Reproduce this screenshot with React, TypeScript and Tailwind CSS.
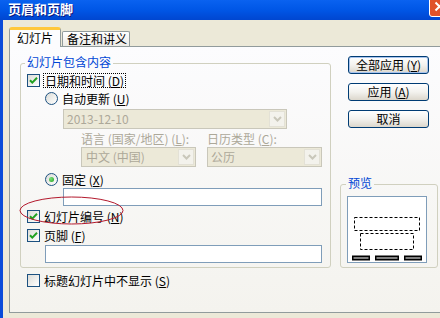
import React from "react"

const CheckBox = ({ checked }: { checked?: boolean }) => (
  <span className="w-[13px] h-[13px] shrink-0 border border-[#1C5180] bg-linear-to-br from-[#DCDCD7] to-white flex items-center justify-center">
    {checked && (
      <svg width="11" height="11" viewBox="0 0 11 11">
        <path d="M2 5.2 L4.3 7.6 L9 2.8" fill="none" stroke="#21A121" strokeWidth="2" />
      </svg>
    )}
  </span>
)

const Radio = ({ checked }: { checked?: boolean }) => (
  <span className="w-[13px] h-[13px] shrink-0 rounded-full border border-[#1C5180] bg-linear-to-br from-[#DCDCD7] to-white flex items-center justify-center">
    {checked && <span className="w-[5px] h-[5px] rounded-full bg-[radial-gradient(circle_at_35%_35%,#7BE27A,#1E9E1E)]" />}
  </span>
)

const DropBtn = () => (
  <span className="w-[16px] h-[16px] mr-[1px] shrink-0 bg-[#F3F2EC] border border-[#E3E1D6] flex items-center justify-center">
    <svg width="9" height="6" viewBox="0 0 9 6">
      <path d="M1 1 L4.5 4.5 L8 1" fill="none" stroke="#C9C7BA" strokeWidth="2" />
    </svg>
  </span>
)

const Btn = ({ children, primary }: { children: React.ReactNode; primary?: boolean }) => (
  <div
    className={
      primary
        ? "ml-[8px] w-[81px] h-[18px] rounded-[3px] border border-[#003C74] bg-linear-to-b from-white via-[#F3F2EE] to-[#DCD7CC] shadow-[inset_0_0_0_1px_#A8C4EE] flex items-center justify-center leading-none"
        : "ml-[8px] w-[81px] h-[18px] rounded-[3px] border border-[#003C74] bg-linear-to-b from-white via-[#F3F2EE] to-[#DCD7CC] flex items-center justify-center leading-none"
    }
  >
    {children}
  </div>
)

export default function App() {
  return (
    <div className="relative w-[440px] h-[318px] overflow-hidden bg-[#ECE9D8] flex flex-col font-['Noto_Sans_CJK_SC','Noto_Sans',sans-serif] text-[12px] text-black">
      {/* title bar */}
      <div className="h-[20px] shrink-0 flex bg-linear-to-b from-[#0A62F0] via-[#0056E6] to-[#0046D0]">
        <span className="ml-[8px] pt-[1px] text-[13px] leading-[15px] font-bold text-white [text-shadow:1px_1px_#0A1A80]">页眉和页脚</span>
        <div className="ml-auto mr-[-10px] mt-[-4px] w-[21px] h-[21px] rounded-[3px] border border-white bg-[#E0522A] flex items-center justify-center">
          <svg width="11" height="11" viewBox="0 0 11 11">
            <path d="M1.5 1.5 L9.5 9.5 M9.5 1.5 L1.5 9.5" stroke="white" strokeWidth="2" />
          </svg>
        </div>
      </div>

      <div className="flex-1 border-l-[3px] border-[#0A4BD9] pt-[7px] pl-[6px] flex flex-col">
        {/* tabs */}
        <div className="h-[19px] shrink-0 flex items-end">
          <div className="relative z-10 mb-[-1px] w-[52px] h-[20px] border-x border-[#919B9C] border-t-[3px] border-t-[#FFC83C] rounded-t-[3px] bg-[#FCFCFE] pl-[7px] leading-[15px]">
            幻灯片
          </div>
          <div className="ml-[1px] w-[68px] h-[15px] border-x border-t border-[#919B9C] rounded-t-[2px] bg-linear-to-b from-white to-[#ECEBE6] pl-[4px] leading-[14px]">
            备注和讲义
          </div>
        </div>

        {/* tab page */}
        <div className="w-[436px] h-[267px] shrink-0 border border-[#919B9C] bg-linear-to-b from-[#FCFCFE] to-[#F4F3EE] flex">
          <div className="ml-[10px] pt-[9px] w-[311px] shrink-0 flex flex-col">
            <fieldset className="w-[311px] border border-[#D0D0BF] rounded-[3px] pb-[4px] flex flex-col">
              <legend className="ml-[4px] px-[2px] h-[14px] leading-[12px] text-[#0046D5]">幻灯片包含内容</legend>

              <div className="mt-[3px] h-[15px] flex items-center ml-[6px]">
                <CheckBox checked />
                <span className="ml-[3px] h-[15px] border border-dotted border-black px-[1px] leading-[13px]">
                  日期和时间 (<u>D</u>)
                </span>
              </div>

              <div className="mt-[3px] h-[15px] flex items-center ml-[24px]">
                <Radio />
                <span className="ml-[4px] leading-[15px]">自动更新 (<u>U</u>)</span>
              </div>

              <div className="mt-[3px] ml-[42px] w-[224px] h-[20px] border border-[#C9C7BA] bg-[#ECE9D8] flex items-center">
                <span className="ml-[3px] flex-1 text-[#ACA899] leading-none">2013-12-10</span>
                <DropBtn />
              </div>

              <div className="mt-[3px] ml-[60px] h-[14px] flex text-[#ACA899] leading-[14px]">
                <span className="w-[126px]">语言 (国家/地区) (<u>L</u>):</span>
                <span>日历类型 (<u>C</u>):</span>
              </div>

              <div className="mt-[1px] ml-[60px] h-[20px] flex gap-[11px]">
                <div className="w-[115px] h-[20px] border border-[#C9C7BA] bg-[#ECE9D8] flex items-center">
                  <span className="ml-[4px] flex-1 text-[#ACA899] leading-none">中文 (中国)</span>
                  <DropBtn />
                </div>
                <div className="w-[115px] h-[20px] border border-[#C9C7BA] bg-[#ECE9D8] flex items-center">
                  <span className="ml-[3px] flex-1 text-[#ACA899] leading-none">公历</span>
                  <DropBtn />
                </div>
              </div>

              <div className="mt-[5px] h-[15px] flex items-center ml-[24px]">
                <Radio checked />
                <span className="ml-[4px] leading-[15px]">固定 (<u>X</u>)</span>
              </div>

              <div className="mt-[1px] ml-[42px] w-[259px] h-[18px] border border-[#7F9DB9] bg-white" />

              <div className="mt-[3px] h-[15px] flex items-center ml-[6px]">
                <CheckBox checked />
                <span className="ml-[4px] leading-[15px]">幻灯片编号 (<u>N</u>)</span>
              </div>

              <div className="mt-[4px] h-[15px] flex items-center ml-[6px]">
                <CheckBox checked />
                <span className="ml-[4px] leading-[15px]">页脚 (<u>F</u>)</span>
              </div>

              <div className="mt-[2px] ml-[24px] w-[277px] h-[18px] border border-[#7F9DB9] bg-white" />
            </fieldset>

            <div className="mt-[5px] h-[15px] flex items-center ml-[7px]">
              <CheckBox />
              <span className="ml-[4px] leading-[15px]">标题幻灯片中不显示 (<u>S</u>)</span>
            </div>
          </div>

          <div className="ml-[9px] pt-[9px] w-[98px] shrink-0 flex flex-col">
            <Btn primary>全部应用 (<u>Y</u>)</Btn>
            <div className="h-[9px]" />
            <Btn>应用 (<u>A</u>)</Btn>
            <div className="h-[9px]" />
            <Btn>取消</Btn>

            <fieldset className="mt-[49px] w-[98px] border border-[#D0D0BF] rounded-[3px] pb-[4px]">
              <legend className="ml-[5px] px-[2px] h-[14px] leading-[12px] text-[#0046D5]">预览</legend>
              <div className="mt-[5px] ml-[6px] w-[80px] h-[67px] border border-[#7F9DB9] bg-white">
                <svg width="78" height="65" viewBox="0 0 78 65">
                  <rect x="6.5" y="20.5" width="65" height="13" fill="none" stroke="black" strokeDasharray="3 2" />
                  <rect x="12.5" y="36.5" width="53" height="16" fill="none" stroke="black" strokeDasharray="3 2" />
                  <rect x="4" y="58.5" width="18" height="5" fill="black" />
                  <rect x="27" y="58.5" width="24" height="5" fill="black" />
                  <rect x="56" y="58.5" width="18" height="5" fill="black" />
                  <rect x="5.5" y="60.5" width="15" height="1" fill="white" />
                  <rect x="28.5" y="60.5" width="21" height="1" fill="white" />
                  <rect x="57.5" y="60.5" width="15" height="1" fill="white" />
                </svg>
              </div>
            </fieldset>
          </div>
        </div>
      </div>

      {/* red annotation ellipse */}
      <svg className="absolute left-[19px] top-[196px]" width="106" height="30" viewBox="0 0 106 30">
        <ellipse cx="52.5" cy="14.5" rx="51.5" ry="13.5" fill="none" stroke="#B3182C" strokeWidth="1" />
      </svg>
    </div>
  )
}
